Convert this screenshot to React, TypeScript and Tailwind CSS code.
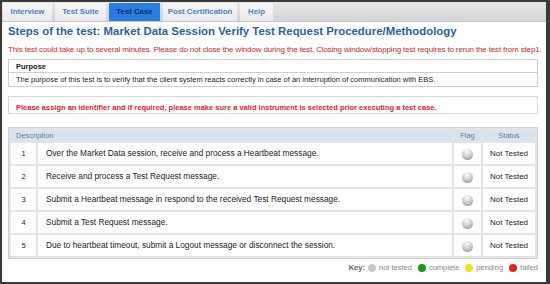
import React from "react";

const rows = [
  "Over the Market Data session, receive and process a Heartbeat message.",
  "Receive and process a Test Request message.",
  "Submit a Heartbeat message in respond to the received Test Request message.",
  "Submit a Test Request message.",
  "Due to heartbeat timeout, submit a Logout message or disconnect the session.",
];

export default function App() {
  const tabs = ["Interview", "Test Suite", "Test Case", "Post Certification", "Help"];
  const widths = ["w-[49px]", "w-[51px]", "w-[51px]", "w-[74px]", "w-[33px]"];
  return (
    <div
      className="w-[550px] h-[284px] bg-[#3a3a3a] pt-[2px] pl-[2px] pr-[4px] pb-[2px] overflow-hidden"
      style={{ fontFamily: '"Liberation Sans", Arial, sans-serif' }}
    >
      <div className="w-full h-full bg-white flex flex-col">
        <div className="h-[20px] shrink-0 flex items-stretch gap-[3px] pl-[1px] pt-[1px] bg-gradient-to-b from-[#e6e6e6] to-[#d4d4d4] border-b border-[#c8c8c8]">
          {tabs.map((t, i) => (
            <div
              key={t}
              className={`${widths[i]} flex items-center justify-center whitespace-nowrap text-[7.8px] font-bold ${
                t === "Test Case"
                  ? "bg-[#2a7de0] text-[#0d2a66]"
                  : "bg-gradient-to-b from-[#f6f6f6] to-[#ebebeb] text-[#4d7fc0]"
              }`}
            >
              {t}
            </div>
          ))}
        </div>
        <div className="px-[6px] pt-[1px] flex flex-col">
          <div className="text-[11.4px] font-bold text-[#2c5f9e] leading-[16px] h-[16px] whitespace-nowrap">
            Steps of the test: Market Data Session Verify Test Request Procedure/Methodology
          </div>
          <div className="text-[8px] tracking-[-0.14px] text-[#c8282c] leading-[11px] mt-[5px] whitespace-nowrap">
            This test could take up to several minutes. Please do not close the window during the test. Closing window/stopping test requires to rerun the test from step1.
          </div>
          <div className="mt-[4px] w-[530px] border border-[#cfcfcf] text-[7.5px] text-[#222]">
            <div className="h-[13px] leading-[13px] pl-[7px] font-bold border-b border-[#cfcfcf]">Purpose</div>
            <div className="h-[13px] leading-[13px] pl-[7px] whitespace-nowrap">
              The purpose of this test is to verify that the client system reacts correctly in case of an interruption of communication with EBS.
            </div>
          </div>
          <div className="mt-[9px] w-[530px] h-[18px] border border-[#d6d6d6] pl-[7px] pt-[5px] text-[7.5px] font-bold text-[#e5202a] leading-[11px] whitespace-nowrap">
            Please assign an identifier and if required, please make sure a valid instrument is selected prior executing a test case.
          </div>
          <table className="mt-[13px] w-[530px] border-separate border-spacing-[2px] bg-[#e4e4e4] border border-[#d0d0d0] text-[8.3px] text-[#222]">
            <thead>
              <tr className="h-[11px]">
                <th colSpan={2} className="text-left font-normal leading-[11px] text-[#6a7f90] pl-[5px] bg-[#d5e4ef] text-[7.5px]">
                  Description
                </th>
                <th className="w-[27px] font-normal leading-[11px] text-[#6a7f90] bg-[#d5e4ef] text-[7.5px]">Flag</th>
                <th className="w-[52px] font-normal leading-[11px] text-[#6a7f90] bg-[#d5e4ef] text-[7.5px]">Status</th>
              </tr>
            </thead>
            <tbody>
              {rows.map((r, i) => (
                <tr key={i} className="h-[21px]">
                  <td className="w-[25px] bg-white text-center text-[7.5px]">{i + 1}</td>
                  <td className="bg-white pl-[8px] whitespace-nowrap">{r}</td>
                  <td className="bg-white text-center">
                    <span
                      className="inline-block w-[11px] h-[11px] rounded-full align-middle"
                      style={{ background: "radial-gradient(circle at 45% 25%, #ffffff, #c4c4c4 55%, #7e7e7e)" }}
                    />
                  </td>
                  <td className="bg-white text-center text-[8px] whitespace-nowrap">Not Tested</td>
                </tr>
              ))}
            </tbody>
          </table>
          <div className="w-[530px] flex justify-end items-center gap-[3px] mt-[4px] leading-[10px] text-[7.5px] text-[#8a8a8a]">
            <span className="font-bold text-[#666]">Key:</span>
            <span className="w-[8px] h-[8px] rounded-full bg-[#c8c8c8] inline-block" />
            <span className="mr-[3px]">not tested</span>
            <span className="w-[8px] h-[8px] rounded-full bg-[#1a9a1a] inline-block" />
            <span className="mr-[3px]">complete</span>
            <span className="w-[8px] h-[8px] rounded-full bg-[#f2e21a] inline-block" />
            <span className="mr-[3px]">pending</span>
            <span className="w-[8px] h-[8px] rounded-full bg-[#e52222] inline-block" />
            <span>failed</span>
          </div>
        </div>
      </div>
    </div>
  );
}
